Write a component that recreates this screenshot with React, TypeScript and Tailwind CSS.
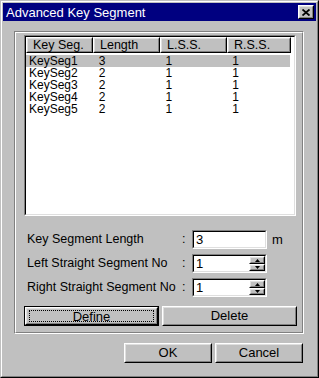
import React from "react";

const rows = [
    { name: "KeySeg1", len: "3", lss: "1", rss: "1" },
    { name: "KeySeg2", len: "2", lss: "1", rss: "1" },
    { name: "KeySeg3", len: "2", lss: "1", rss: "1" },
    { name: "KeySeg4", len: "2", lss: "1", rss: "1" },
    { name: "KeySeg5", len: "2", lss: "1", rss: "1" },
];

// classic 3d button frame
function Raised({ className = "", children }: { className?: string; children?: React.ReactNode }) {
    return (
        <div className={`border border-t-white border-l-white border-r-black border-b-black ${className}`}>
            <div className="flex h-full w-full items-center justify-center border border-t-[#dfdfdf] border-l-[#dfdfdf] border-r-[#808080] border-b-[#808080] bg-[#c0c0c0]">
                {children}
            </div>
        </div>
    );
}

function Sunken({ className = "", children }: { className?: string; children?: React.ReactNode }) {
    return (
        <div className={`border border-t-[#808080] border-l-[#808080] border-r-white border-b-white ${className}`}>
            <div className="flex h-full w-full border border-t-black border-l-black border-r-[#dfdfdf] border-b-[#dfdfdf] bg-white">
                {children}
            </div>
        </div>
    );
}

function Arrow({ up }: { up?: boolean }) {
    return (
        <svg width="5" height="3" viewBox="0 0 5 3">
            <polygon points={up ? "2.5,0 5,3 0,3" : "0,0 5,0 2.5,3"} fill="black" />
        </svg>
    );
}

function SpinField({ value }: { value: string }) {
    return (
        <Sunken className="h-[19px] w-[75px]">
            <span className="flex-1 pl-[2px] text-[13px] leading-[15px]">{value}</span>
            <div className="flex w-[16px] flex-col">
                <Raised className="h-[8px] w-[16px]">
                    <Arrow up />
                </Raised>
                <Raised className="h-[7px] w-[16px]">
                    <Arrow />
                </Raised>
            </div>
        </Sunken>
    );
}

export default function App() {
    const cols = ["w-[67px]", "w-[67px]", "w-[67px]", "w-[64px]"];
    const headers = ["Key Seg.", "Length", "L.S.S.", "R.S.S."];

    return (
        <div className="h-[378px] w-[319px] bg-[#c0c0c0] font-['Liberation_Sans',Arial,sans-serif] text-black">
            <div className="h-full border border-t-[#c0c0c0] border-l-[#c0c0c0] border-r-black border-b-black">
                <div className="flex h-full flex-col border border-t-white border-l-white border-r-[#808080] border-b-[#808080] p-px">
                    {/* title bar */}
                    <div className="flex h-[18px] items-center justify-between bg-[#000080] pl-[3px] pr-[2px]">
                        <span className="text-[13px] leading-none text-white">Advanced Key Segment</span>
                        <Raised className="h-[14px] w-[16px]">
                            <svg width="8" height="7" viewBox="0 0 8 7">
                                <path d="M0.5 0.5 L7.5 6.5 M7.5 0.5 L0.5 6.5" stroke="black" strokeWidth="1.8" />
                            </svg>
                        </Raised>
                    </div>

                    {/* group box */}
                    <div className="ml-[11px] mt-[10px] h-[303px] w-[290px] border border-t-[#808080] border-l-[#808080] border-r-white border-b-white">
                        <div className="flex h-full flex-col border border-t-white border-l-white border-r-[#808080] border-b-[#808080] pl-[8px] pt-[2px]">
                            <Sunken className="h-[181px] w-[272px]">
                                <div className="flex flex-col">
                                    <div className="flex h-[16px]">
                                        {headers.map((h, i) => (
                                            <div key={h} className={`${cols[i]} border border-t-white border-l-white border-r-black border-b-black`}>
                                                <div className="h-full border border-t-[#dfdfdf] border-l-[#dfdfdf] border-r-[#808080] border-b-[#808080] bg-[#c0c0c0] pl-[5px] text-[12.5px] leading-[12px]">
                                                    {h}
                                                </div>
                                            </div>
                                        ))}
                                    </div>
                                    <div className="mt-[2px] flex flex-col">
                                        {rows.map((r, idx) => (
                                            <div
                                                key={r.name}
                                                className={`flex h-[12px] w-[264px] text-[12px] leading-[12px] ${idx === 0 ? "bg-[#c0c0c0]" : ""}`}
                                            >
                                                <span className={`${cols[0]} pl-[3px]`}>{r.name}</span>
                                                <span className={`${cols[1]} pl-[6px]`}>{r.len}</span>
                                                <span className={`${cols[2]} pl-[6px]`}>{r.lss}</span>
                                                <span className={`${cols[3]} pl-[6px]`}>{r.rss}</span>
                                            </div>
                                        ))}
                                    </div>
                                </div>
                            </Sunken>

                            {/* form fields */}
                            <div className="mt-[14px] flex flex-col gap-[5px] pl-[3px] text-[12.5px]">
                                <div className="flex h-[19px] items-center">
                                    <span className="w-[155px]">Key Segment Length</span>
                                    <span className="w-[10px]">:</span>
                                    <Sunken className="h-[19px] w-[75px]">
                                        <span className="pl-[2px] text-[13px] leading-[15px]">3</span>
                                    </Sunken>
                                    <span className="ml-[5px] text-[13px]">m</span>
                                </div>
                                <div className="flex h-[19px] items-center">
                                    <span className="w-[155px]">Left Straight Segment No</span>
                                    <span className="w-[10px]">:</span>
                                    <SpinField value="1" />
                                </div>
                                <div className="flex h-[19px] items-center">
                                    <span className="w-[155px]">Right Straight Segment No</span>
                                    <span className="w-[10px]">:</span>
                                    <SpinField value="1" />
                                </div>
                            </div>

                            {/* define / delete */}
                            <div className="mt-[9px] flex gap-[3px] text-[13px]">
                                <div className="h-[20px] w-[135px] border border-black">
                                    <Raised className="h-full w-full">
                                        <div className="flex h-[12px] w-[125px] items-center justify-center border border-dotted border-black leading-none">
                                            Define
                                        </div>
                                    </Raised>
                                </div>
                                <Raised className="h-[20px] w-[135px]">Delete</Raised>
                            </div>
                        </div>
                    </div>

                    {/* ok / cancel */}
                    <div className="ml-[121px] mt-[9px] flex gap-[3px] text-[13px]">
                        <Raised className="h-[20px] w-[88px]">OK</Raised>
                        <Raised className="h-[20px] w-[88px]">Cancel</Raised>
                    </div>
                </div>
            </div>
        </div>
    );
}
